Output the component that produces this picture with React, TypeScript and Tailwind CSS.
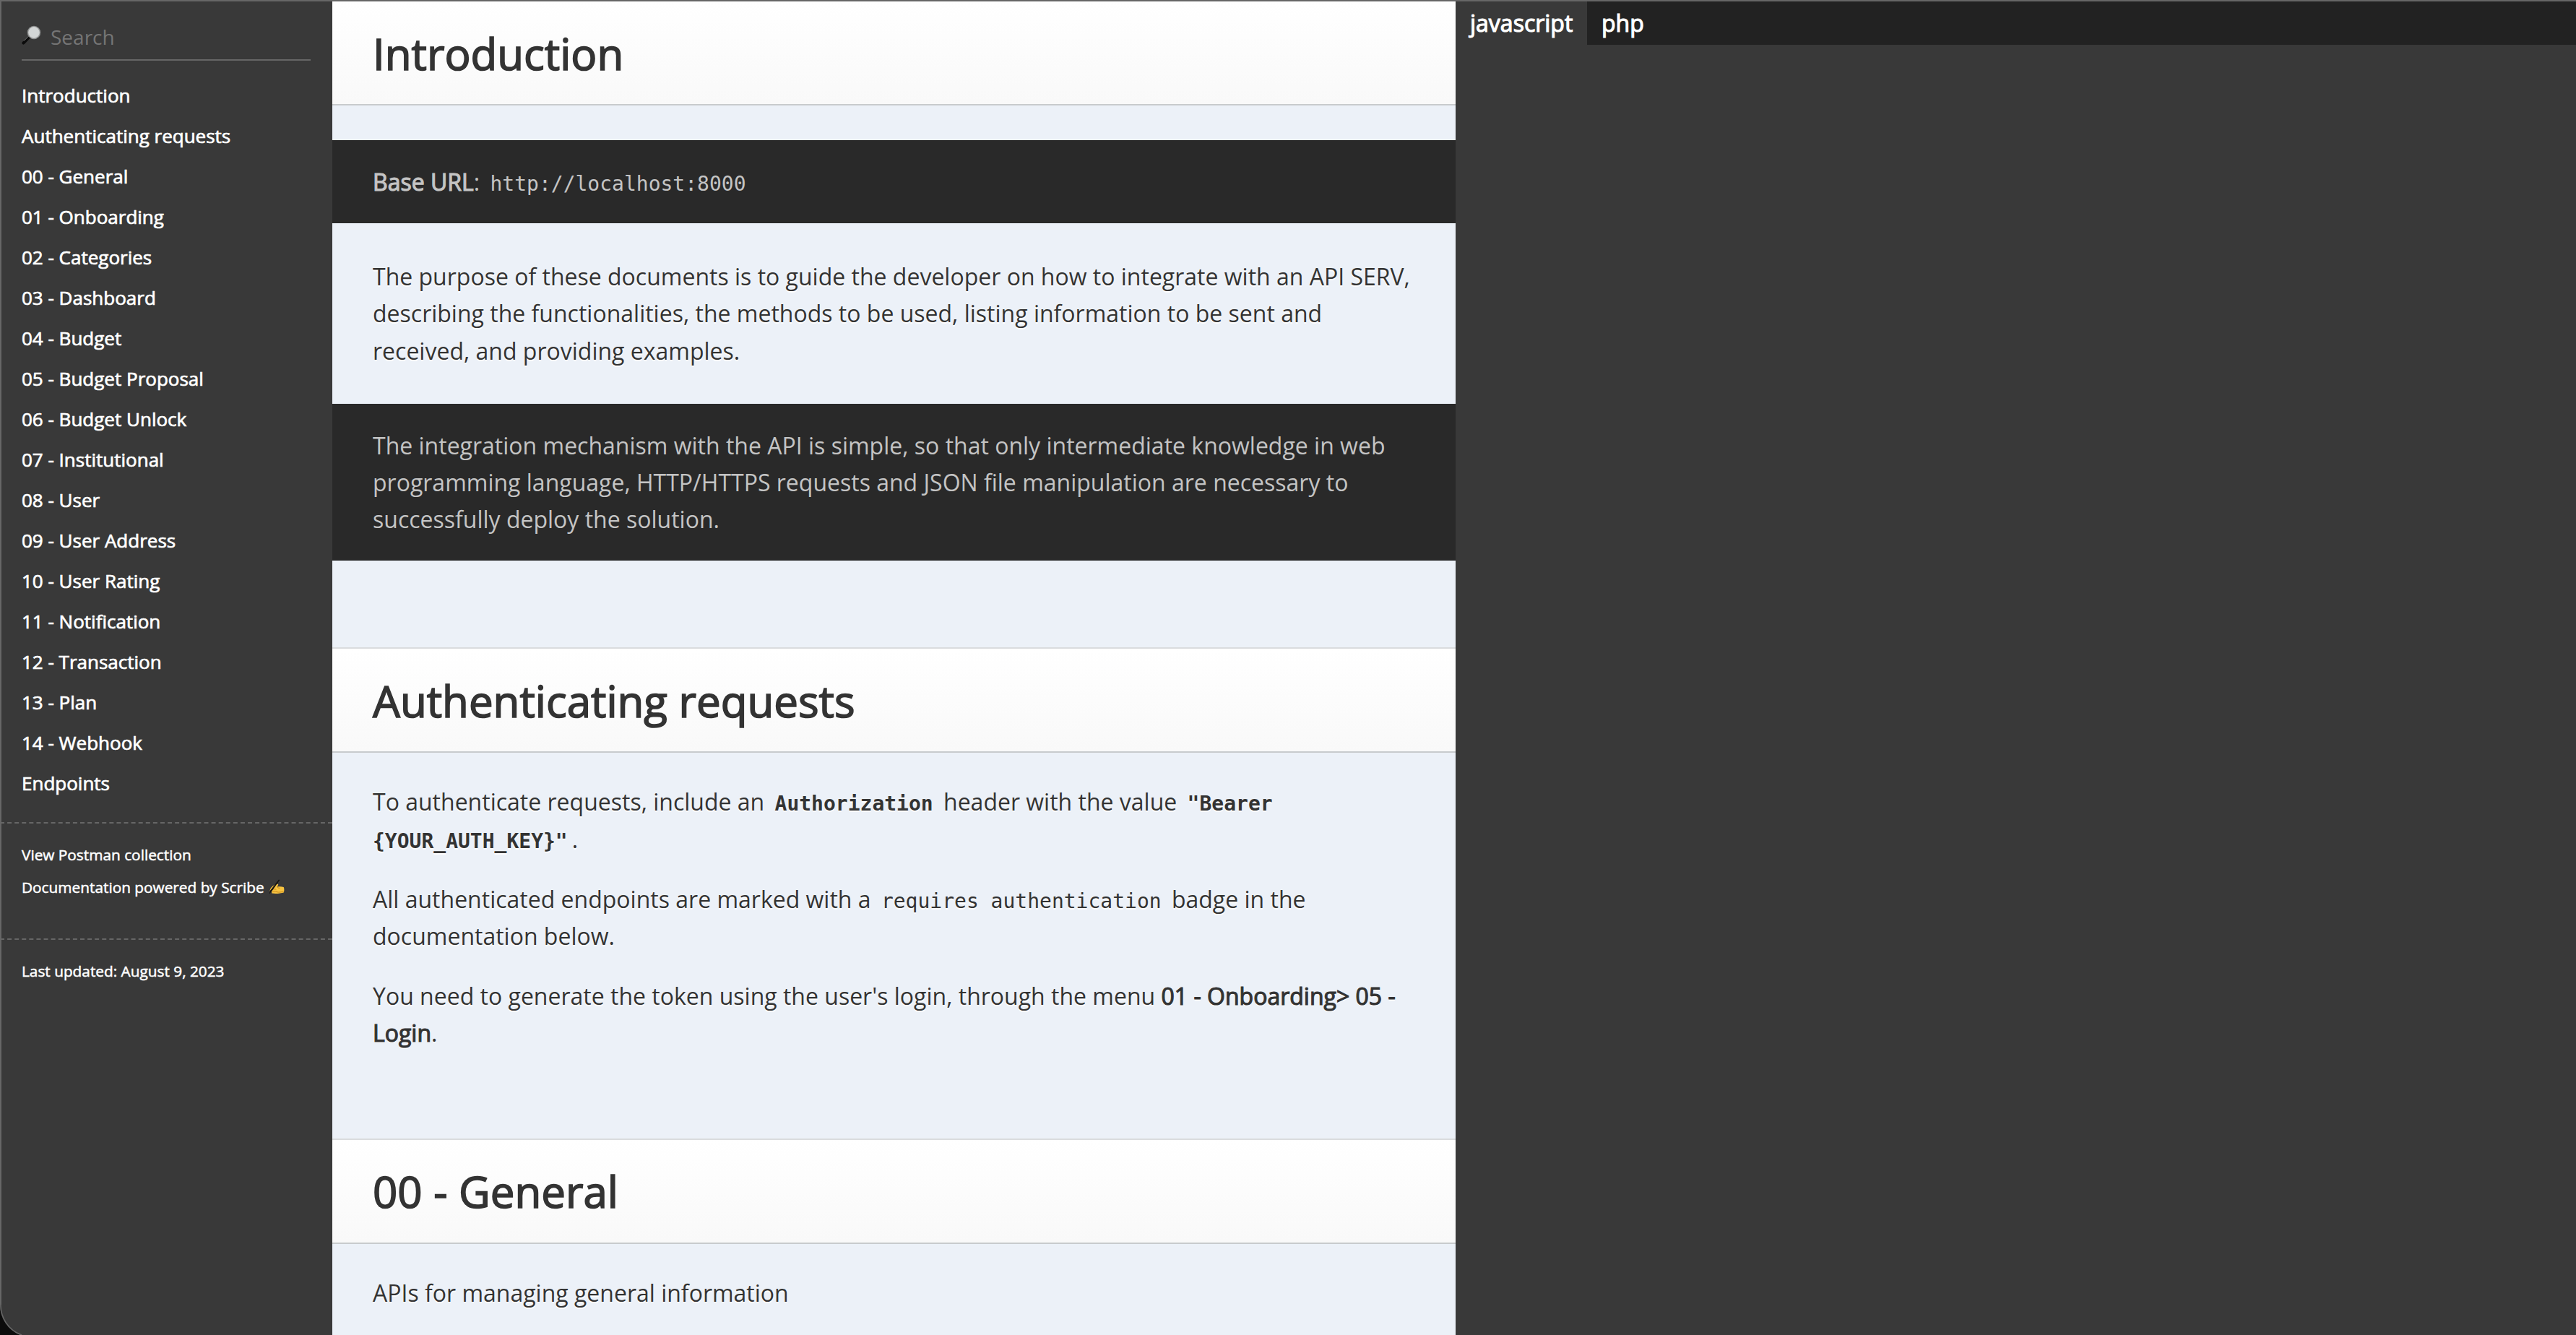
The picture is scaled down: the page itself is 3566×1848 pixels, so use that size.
import React from "react";

const NAV = [
  "Introduction", "Authenticating requests", "00 - General", "01 - Onboarding", "02 - Categories",
  "03 - Dashboard", "04 - Budget", "05 - Budget Proposal", "06 - Budget Unlock", "07 - Institutional",
  "08 - User", "09 - User Address", "10 - User Rating", "11 - Notification", "12 - Transaction",
  "13 - Plan", "14 - Webhook", "Endpoints",
];

function Magnifier() {
  return (
    <svg className="absolute left-[30px] top-[35px]" width="27" height="28" viewBox="0 0 27 28">
      <line x1="2.6" y1="24.4" x2="10" y2="16.6" stroke="#0b0b0b" strokeWidth="4.2" strokeLinecap="round" />
      <line x1="3" y1="21.6" x2="9.6" y2="15" stroke="#8a8a8a" strokeWidth="1" />
      <circle cx="17" cy="10" r="8.6" fill="#cfd1d1" stroke="#8b8d8d" strokeWidth="1.4" />
      <circle cx="16.8" cy="9.6" r="6.8" fill="#d3d6d6" />
    </svg>
  );
}

function WritingHand() {
  return (
    <svg className="ml-[6px] inline-block align-[-3px]" width="22" height="22" viewBox="0 0 22 22">
      <path d="M1.5 16.5 C1.6 13 4 10 8 8 C10.4 6.6 13 6 13.2 7.6 C13.2 8.6 12 9.6 11.6 10.6 C14.5 10.2 18 10 20.6 11 C21.6 12 21.6 17 20.8 18.4 C17 19.6 10 20.4 4.5 19.6 C3.6 19.2 4 18.2 5 18 Z" fill="#f7c340" />
      <path d="M5.4 14.4 C7 13.4 9 13.6 10.4 14.6 M5.4 17.4 C7.4 16.6 9.4 16.8 11 17.6 C14 18.6 18 17.8 20.8 17 M11.4 10.6 C12.4 11.8 13.6 12.4 15.4 12.4" stroke="#c98a1c" strokeWidth="1" fill="none" />
      <path d="M14 0.4 L15.2 1.2 L4.4 16.6 L0.8 20.6 L1.8 16 Z" fill="#111" />
    </svg>
  );
}

function Title({ children }: { children: React.ReactNode }) {
  return (
    <h1 className="flex h-[146px] items-center border-y-2 border-t-[#dadcde] border-b-[#c8cbcd] bg-linear-to-b from-white to-[#f9f9f9] pt-[1px] pl-14 text-[60px] leading-none text-[#333] [-webkit-text-stroke:1.6px_#333] [text-shadow:0_2px_0_#fff]">
      {children}
    </h1>
  );
}

function Code({ children, bold }: { children: React.ReactNode; bold?: boolean }) {
  return (
    <code className={"px-[6px] text-[28px] leading-none [font-family:'DejaVu_Sans_Mono',monospace] " + (bold ? "font-bold" : "")}>
      {children}
    </code>
  );
}

function Strong({ children }: { children: React.ReactNode }) {
  return <b className="font-normal [-webkit-text-stroke:1.1px_currentColor]">{children}</b>;
}

export default function App() {
  return (
    <div className="relative flex h-[1848px] w-[3566px] overflow-hidden bg-[#393939] [font-family:'Open_Sans',sans-serif]">
      <aside className="relative w-[460px] shrink-0 text-white">
        <Magnifier />
        <div className="mx-[30px] h-[84px] border-b-2 border-[#666] pt-[34px] pl-10 text-[28px] leading-[35px] text-[#757575]">
          Search
        </div>
        <ul className="h-[1054px] pt-5 pl-[30px] text-[26px] leading-[56px] [-webkit-text-stroke:0.7px_#fff]">
          {NAV.map((n) => (
            <li key={n}>{n}</li>
          ))}
        </ul>
        <ul className="h-[161px] border-t-2 border-dashed border-[#666] pt-[21px] pl-[30px] text-[20.8px] leading-[45px] [-webkit-text-stroke:0.5px_#fff]">
          <li>View Postman collection</li>
          <li className="whitespace-nowrap">
            Documentation powered by Scribe
            <WritingHand />
          </li>
        </ul>
        <div className="border-t-2 border-dashed border-[#666] pt-[21px] pl-[30px] text-[20.8px] leading-[45px] [-webkit-text-stroke:0.5px_#fff]">
          Last updated: August 9, 2023
        </div>
      </aside>

      <main className="w-[1555px] shrink-0 bg-[#ecf1f8] text-[32px] leading-[51.2px] whitespace-nowrap text-[#333]">
        <Title>Introduction</Title>
        <aside className="mt-12 bg-[#292929] px-14 py-8 text-[#c4c4c4]">
          <Strong>Base URL</Strong>: <Code>http://localhost:8000</Code>
        </aside>
        <p className="my-12 px-14 [text-shadow:0_2px_0_#fff]">
          The purpose of these documents is to guide the developer on how to integrate with an API SERV,
          <br />
          describing the functionalities, the methods to be used, listing information to be sent and
          <br />
          received, and providing examples.
        </p>
        <aside className="mb-[120px] bg-[#292929] px-14 py-8 text-[#c4c4c4]">
          The integration mechanism with the API is simple, so that only intermediate knowledge in web
          <br />
          programming language, HTTP/HTTPS requests and JSON file manipulation are necessary to
          <br />
          successfully deploy the solution.
        </aside>
        <Title>Authenticating requests</Title>
        <div className="mt-[42px] mb-[120px] flex flex-col gap-8 px-14 [text-shadow:0_2px_0_#fff]">
          <p>
            To authenticate requests, include an <Code bold>Authorization</Code> header with the value{" "}
            <Code bold>
              "Bearer
              <br />
              {"{YOUR_AUTH_KEY}\""}
            </Code>
            .
          </p>
          <p>
            All authenticated endpoints are marked with a <Code>requires authentication</Code> badge in the
            <br />
            documentation below.
          </p>
          <p>
            You need to generate the token using the user's login, through the menu <Strong>01 - Onboarding&gt; 05 -</Strong>
            <br />
            <Strong>Login</Strong>.
          </p>
        </div>
        <Title>00 - General</Title>
        <p className="mt-[42px] px-14 [text-shadow:0_2px_0_#fff]">APIs for managing general information</p>
      </main>

      <section className="min-w-0 flex-1">
        <div className="flex h-[62px] bg-[#222] pt-[2px] text-[32px] leading-[60px] text-white [-webkit-text-stroke:1.1px_#fff]">
          <div className="w-[182px] bg-[#393939] pl-5">javascript</div>
          <div className="pl-5">php</div>
        </div>
      </section>

      <div className="absolute inset-x-0 top-0 h-[2px] bg-[#666]" />
      <div className="absolute top-0 left-0 h-[1806px] w-[2px] bg-[#666]" />
      <svg className="absolute bottom-0 left-0" width="48" height="48" viewBox="0 0 48 48">
        <path d="M0 6 A44 44 0 0 0 28 48 L0 48 Z" fill="#0c0c0c" />
        <path d="M1 4 A44 44 0 0 0 30 48" fill="none" stroke="#666" strokeWidth="1.6" />
      </svg>
    </div>
  );
}
